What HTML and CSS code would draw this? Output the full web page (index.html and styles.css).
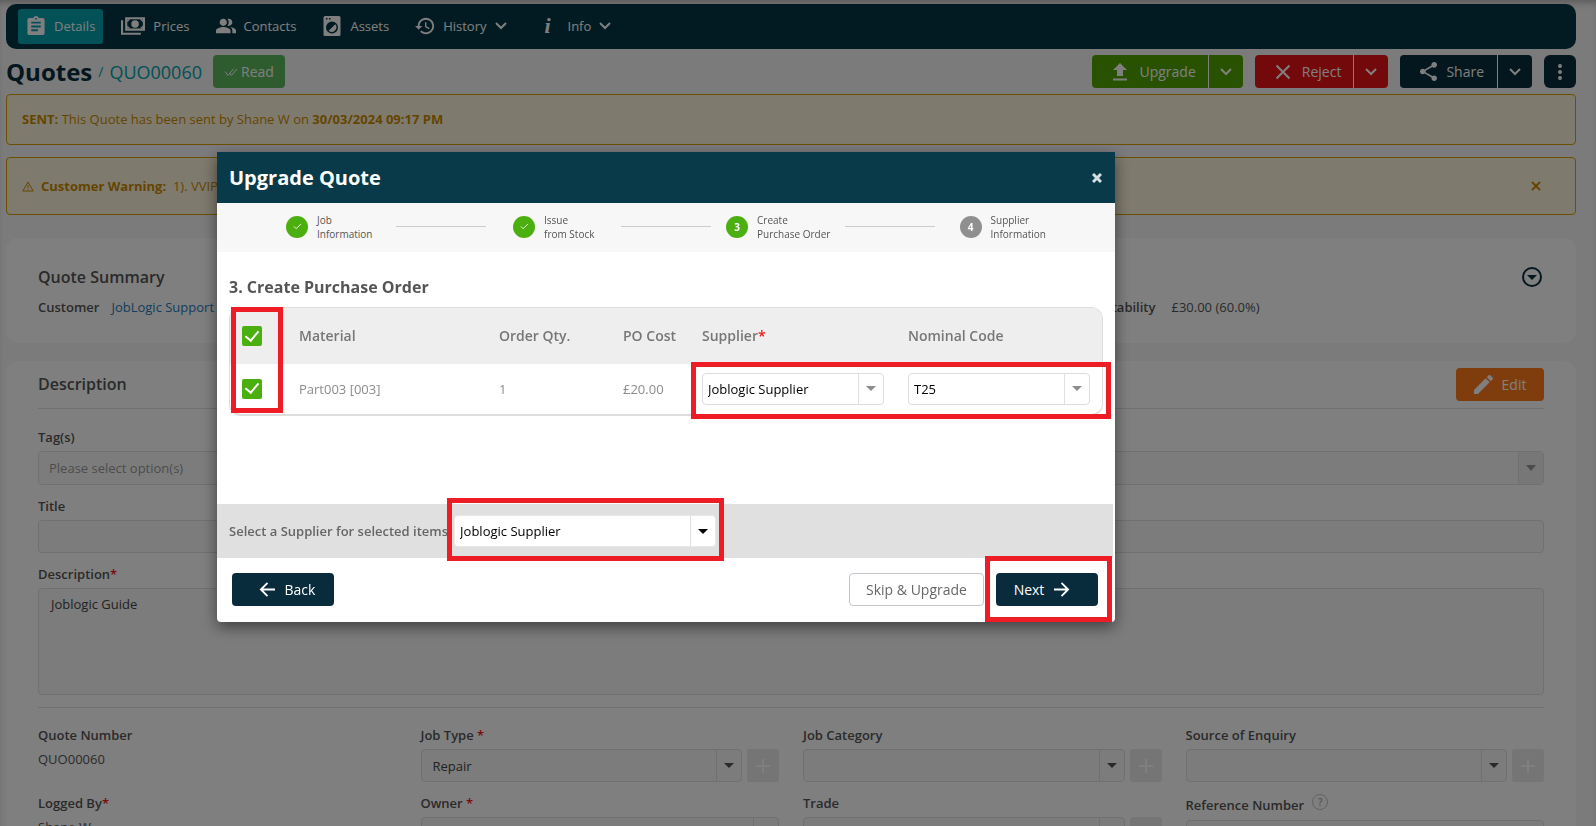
FILE: index.html
```html
<!DOCTYPE html>
<html lang="en">
<head>
<meta charset="utf-8">
<title>Quotes / QUO00060</title>
<link rel="stylesheet" href="styles.css">
</head>
<body>
<div class="page">
  <nav class="nav">
    <a class="tab tab-active" href="#details">
      <svg class="icon-nav" viewBox="2 1 20 21"><path d="M19 3h-4.180C14.400 1.840 13.300 1 12 1s-2.400.84-2.820 2H5c-1.100 0-2 .9-2 2v14c0 1.100.9 2 2 2h14c1.100 0 2-.9 2-2V5c0-1.100-.9-2-2-2zm-7 0c.55 0 1 .45 1 1s-.45 1-1 1-1-.45-1-1 .45-1 1-1zm2 14H7v-2h7v2zm3-4H7v-2h10v2zm0-4H7V7h10v2z"/></svg>
      Details</a>
    <a class="tab" href="#prices">
      <svg class="icon-wide" viewBox="0 0 23 17"><path fill-rule="evenodd" d="M4 0h19v13H4zM6 2v9h15V2z"/><path d="M6 2h3L6 5zM21 2v3l-3-3zM6 11V8l3 3zM21 11h-3l3-3z"/><circle cx="13.500" cy="6.500" r="3.600"/><path d="M0 3h2v12h17v2H0z"/></svg>
      Prices</a>
    <a class="tab" href="#contacts">
      <svg class="icon-nav" viewBox="1 2 22 20"><path d="M16.670 13.130C18.040 14.060 19 15.320 19 17v3h4v-3c0-2.180-3.570-3.470-6.330-3.870zM15 12c2.210 0 4-1.790 4-4s-1.790-4-4-4c-.47 0-.91.1-1.330.24C14.500 5.270 15 6.580 15 8s-.5 2.730-1.330 3.760c.42.14.86.24 1.330.24zM9 12c2.210 0 4-1.790 4-4s-1.790-4-4-4-4 1.790-4 4 1.790 4 4 4zm0 1c-2.670 0-8 1.340-8 4v3h16v-3c0-2.660-5.330-4-8-4z"/></svg>
      Contacts</a>
    <a class="tab" href="#assets">
      <svg class="icon-nav" viewBox="2 2 20 20"><path fill-rule="evenodd" d="M5 2h14a1.500 1.500 0 0 1 1.500 1.500v17A1.500 1.500 0 0 1 19 22H5a1.500 1.500 0 0 1-1.500-1.500v-17A1.500 1.500 0 0 1 5 2zM6 4v1.500h1.500V4zm3 0v1.500h1.500V4zM12 7.500a6 6 0 1 0 0 12 6 6 0 0 0 0-12z"/><path d="M15.300 10.200a4.700 4.700 0 0 1-6.600 6.600z"/></svg>
      Assets</a>
    <a class="tab" href="#history">
      <svg class="icon-nav" viewBox="1 2 22 20"><path d="M13 3c-4.970 0-9 4.030-9 9H1l3.890 3.890.07.14L9 12H6c0-3.870 3.130-7 7-7s7 3.130 7 7-3.130 7-7 7c-1.930 0-3.680-.79-4.940-2.060l-1.420 1.420C8.270 19.990 10.510 21 13 21c4.970 0 9-4.030 9-9s-4.030-9-9-9zm-1 5v5l4.280 2.540.72-1.210-3.500-2.080V8H12z"/></svg>
      History
      <svg class="chevron" viewBox="0 0 12 8"><path d="M1 1l5 5 5-5"/></svg></a>
    <a class="tab tab-info" href="#info">
      <span class="info-mark">i</span>
      Info
      <svg class="chevron" viewBox="0 0 12 8"><path d="M1 1l5 5 5-5"/></svg></a>
  </nav>

  <header class="heading">
    <h1 class="title">Quotes</h1>
    <span class="slash">/</span>
    <span class="quote-id">QUO00060</span>
    <button class="btn btn-read" type="button">
      <svg class="icon-read" viewBox="0 0 14 10"><path d="M1 4.500l3 4L9.500 2M5.500 6l2 2.500L13 2"/></svg>
      Read</button>
    <div class="actions">
      <div class="split split-green">
        <button class="btn split-main" type="button">
          <svg class="icon-btn" viewBox="4 2 16 19"><path d="M9 16h6v-6h4l-7-7-7 7h4zm-4 2.500h14V20.500H5z"/></svg>
          Upgrade</button>
        <button class="btn split-more" type="button" aria-label="More upgrade options"><svg class="chevron" viewBox="0 0 12 8"><path d="M1 1l5 5 5-5"/></svg></button>
      </div>
      <div class="split split-red">
        <button class="btn split-main" type="button">
          <svg class="icon-btn icon-line" viewBox="0 0 16 16"><path d="M1.500 1.500l13 13M14.500 1.500l-13 13"/></svg>
          Reject</button>
        <button class="btn split-more" type="button" aria-label="More reject options"><svg class="chevron" viewBox="0 0 12 8"><path d="M1 1l5 5 5-5"/></svg></button>
      </div>
      <div class="split split-navy">
        <button class="btn split-main split-share" type="button">
          <svg class="icon-share" viewBox="2 1 20 22"><path d="M18 16.080c-.76 0-1.440.3-1.960.77L8.910 12.700c.05-.23.09-.46.09-.7s-.04-.47-.09-.7l7.050-4.110c.54.5 1.250.81 2.040.81 1.660 0 3-1.340 3-3s-1.340-3-3-3-3 1.340-3 3c0 .24.04.47.09.7L8.040 9.810C7.500 9.310 6.790 9 6 9c-1.660 0-3 1.340-3 3s1.340 3 3 3c.79 0 1.500-.31 2.040-.81l7.120 4.160c-.05.21-.08.43-.08.65 0 1.610 1.310 2.920 2.920 2.920s2.920-1.310 2.920-2.920-1.310-2.920-2.920-2.920z"/></svg>
          Share</button>
        <button class="btn split-more" type="button" aria-label="More share options"><svg class="chevron" viewBox="0 0 12 8"><path d="M1 1l5 5 5-5"/></svg></button>
      </div>
      <button class="btn btn-kebab" type="button" aria-label="Menu"><svg class="icon-kebab" viewBox="0 0 4 16"><circle cx="2" cy="2" r="2"/><circle cx="2" cy="8" r="2"/><circle cx="2" cy="14" r="2"/></svg></button>
    </div>
  </header>

  <div class="alert"><p><b>SENT:</b> This Quote has been sent by Shane W on <b>30/03/2024 09:17 PM</b></p></div>
  <div class="alert alert-tall">
    <svg class="icon-warn" viewBox="0 0 12 11"><path d="M6 1L11.200 10H.8zM6 4v3.200M6 8v1"/></svg>
    <p><b>Customer Warning:</b>&nbsp; 1). VVIP</p>
    <button class="alert-close" type="button" aria-label="Dismiss"><svg class="icon-x" viewBox="0 0 10 10"><path d="M1 1l8 8M9 1L1 9"/></svg></button>
  </div>

  <section class="card card-summary">
    <div class="card-head">
      <h2 class="card-title">Quote Summary</h2>
      <button class="toggle" type="button" aria-label="Expand summary"><svg viewBox="0 0 20 20"><circle cx="10" cy="10" r="9"/><path d="M5 8h10l-5 5z"/></svg></button>
    </div>
    <dl class="facts">
      <div class="fact"><dt>Customer</dt><dd><a href="#customer">JobLogic Support</a></dd></div>
      <div class="fact fact-wide"><dt>Profitability</dt><dd>£30.00 (60.0%)</dd></div>
    </dl>
  </section>

  <section class="card card-description">
    <div class="card-head card-head-ruled">
      <h2 class="card-title">Description</h2>
      <button class="btn btn-edit" type="button">
        <svg class="icon-edit" viewBox="3 3 18 18"><path d="M3 17.250V21h3.750L17.810 9.940l-3.750-3.750L3 17.250zM20.710 7.040c.39-.39.39-1.020 0-1.410l-2.340-2.340c-.39-.39-1.020-.39-1.410 0l-1.830 1.830 3.750 3.750 1.830-1.830z"/></svg>
        Edit</button>
    </div>
    <div class="field field-tags">
      <label for="tags">Tag(s)</label>
      <div class="select select-tags"><select id="tags" disabled><option>Please select option(s)</option></select><span class="arrow"></span></div>
    </div>
    <div class="field">
      <label for="title">Title</label>
      <input class="input" id="title" type="text" disabled>
    </div>
    <div class="field">
      <label for="description">Description<i class="req">*</i></label>
      <textarea class="input textarea" id="description" disabled>Joblogic Guide</textarea>
    </div>
    <div class="grid">
      <div class="field"><span class="label">Quote Number</span><span class="value">QUO00060</span></div>
      <div class="field"><label for="job-type">Job Type <i class="req">*</i></label>
        <div class="with-add"><div class="select"><select id="job-type" disabled><option>Repair</option></select><span class="arrow"></span></div><button class="add" type="button" disabled aria-label="Add job type"><svg viewBox="0 0 14 14"><path d="M7 0v14M0 7h14"/></svg></button></div></div>
      <div class="field"><label for="job-category">Job Category</label>
        <div class="with-add"><div class="select"><select id="job-category" disabled><option></option></select><span class="arrow"></span></div><button class="add" type="button" disabled aria-label="Add job category"><svg viewBox="0 0 14 14"><path d="M7 0v14M0 7h14"/></svg></button></div></div>
      <div class="field"><label for="source">Source of Enquiry</label>
        <div class="with-add"><div class="select"><select id="source" disabled><option></option></select><span class="arrow"></span></div><button class="add" type="button" disabled aria-label="Add source of enquiry"><svg viewBox="0 0 14 14"><path d="M7 0v14M0 7h14"/></svg></button></div></div>
      <div class="field"><span class="label">Logged By<i class="req">*</i></span><span class="value">Shane W</span></div>
      <div class="field"><label for="owner">Owner <i class="req">*</i></label>
        <div class="select"><select id="owner" disabled><option></option></select><span class="arrow"></span></div></div>
      <div class="field"><label for="trade">Trade</label>
        <div class="with-add"><div class="select"><select id="trade" disabled><option></option></select><span class="arrow"></span></div><button class="add" type="button" disabled aria-label="Add trade"><svg viewBox="0 0 14 14"><path d="M7 0v14M0 7h14"/></svg></button></div></div>
      <div class="field"><label class="label-help" for="reference">Reference Number <span class="help">?</span></label>
        <input class="input" id="reference" type="text" disabled></div>
    </div>
  </section>
</div>

<div class="overlay">
  <div class="modal" role="dialog" aria-labelledby="modal-title">
    <div class="modal-head">
      <h2 class="modal-title" id="modal-title">Upgrade Quote</h2>
      <button class="modal-close" type="button" aria-label="Close"><svg class="icon-x icon-x-bold" viewBox="0 0 10 10"><path d="M1 1l8 8M9 1L1 9"/></svg></button>
    </div>
    <ol class="steps">
      <li class="step"><span class="step-mark"><svg viewBox="0 0 10 8"><path d="M1 4l2.500 2.500L9 1"/></svg></span><span>Job<br>Information</span></li>
      <li class="step"><span class="step-mark"><svg viewBox="0 0 10 8"><path d="M1 4l2.500 2.500L9 1"/></svg></span><span>Issue<br>from Stock</span></li>
      <li class="step"><span class="step-mark">3</span><span>Create<br>Purchase Order</span></li>
      <li class="step"><span class="step-mark step-todo">4</span><span>Supplier<br>Information</span></li>
    </ol>
    <div class="modal-body">
      <h3 class="section-title">3. Create Purchase Order</h3>
      <div class="table-wrap">
        <table class="table">
          <colgroup><col class="col-check"><col class="col-material"><col class="col-qty"><col class="col-cost"><col class="col-supplier"><col></colgroup>
          <thead>
            <tr><th><input class="check" type="checkbox" checked aria-label="Select all"></th><th>Material</th><th>Order Qty.</th><th>PO Cost</th><th>Supplier<i class="req">*</i></th><th>Nominal Code</th></tr>
          </thead>
          <tbody>
            <tr><td><input class="check" type="checkbox" checked aria-label="Select Part003"></td><td>Part003 [003]</td><td>1</td><td>£20.00</td>
              <td><div class="select select-row"><select aria-label="Supplier"><option>Joblogic Supplier</option></select><span class="arrow"></span></div></td>
              <td><div class="select select-row"><select aria-label="Nominal Code"><option>T25</option></select><span class="arrow"></span></div></td></tr>
          </tbody>
        </table>
        <div class="mark mark-checks"></div>
        <div class="mark mark-selects"></div>
      </div>
    </div>
    <div class="bulk">
      <label for="bulk-supplier">Select a Supplier for selected items</label>
      <div class="bulk-pick">
        <div class="select select-bulk"><select id="bulk-supplier"><option>Joblogic Supplier</option></select><span class="arrow"></span></div>
        <div class="mark mark-bulk"></div>
      </div>
    </div>
    <div class="modal-foot">
      <button class="btn btn-navy" type="button"><svg class="icon-arrow" viewBox="0 0 18 16"><path d="M17 8H2M9 1L2 8l7 7"/></svg>Back</button>
      <button class="btn btn-plain" type="button">Skip &amp; Upgrade</button>
      <div class="next-wrap">
        <button class="btn btn-navy btn-next" type="button">Next<svg class="icon-arrow" viewBox="0 0 18 16"><path d="M1 8h15M9 1l7 7-7 7"/></svg></button>
        <div class="mark mark-next"></div>
      </div>
    </div>
  </div>
</div>
</body>
</html>
```

FILE: styles.css
```css
* { box-sizing: border-box; }

body {
  margin: 0;
  font: 13px/20px "Open Sans", "Noto Sans", sans-serif;
  color: #555;
  background: #f6f6f6;
}

h1, h2, h3, p, dl, dd, ol { margin: 0; padding: 0; }
button, input, select, textarea { font: inherit; color: inherit; margin: 0; }
svg { display: block; flex: none; fill: currentColor; }

.page {
  height: 100vh;
  overflow: hidden;
  padding: 4px 20px 0 6px;
  box-shadow: inset 0 6px 6px -3px rgba(0, 0, 0, 0.25);
}

/* Navigation */
.nav {
  display: flex;
  align-items: center;
  gap: 10px;
  height: 45px;
  padding: 0 12px;
  border-radius: 10px;
  background: #053745;
}
.tab {
  display: flex;
  align-items: center;
  gap: 8px;
  height: 35px;
  padding: 0 8px 2px;
  border-radius: 3px;
  color: #fff;
  text-decoration: none;
}
.tab-active { background: #02a2ad; }
.icon-nav { width: 20px; height: 20px; }
.icon-wide { width: 24px; height: 18px; }
.tab-info { margin-left: 3px; }
.info-mark {
  width: 24px;
  text-align: center;
  font: italic bold 22px/20px "Liberation Serif", serif;
}
.chevron {
  width: 12px;
  height: 8px;
  fill: none;
  stroke: currentColor;
  stroke-width: 2;
}

/* Heading */
.heading {
  display: flex;
  align-items: center;
  height: 33px;
  margin: 6px 0;
}
.title { font-size: 24px; line-height: 32px; font-weight: 700; color: #082c3c; }
.slash { margin: 0 6px; font-size: 14px; color: #02a2ad; }
.quote-id { margin-right: 11px; font-size: 18px; color: #02a2ad; }
.btn {
  display: flex;
  align-items: center;
  justify-content: center;
  height: 33px;
  padding: 0;
  border: 0;
  border-radius: 4px;
  font-size: 14px;
  color: #fff;
  background: none;
}
.btn-read { gap: 3px; width: 72px; background: #5cb85c; }
.icon-read { width: 14px; height: 10px; fill: none; stroke: #fff; stroke-width: 1; }
.actions { display: flex; gap: 12px; margin-left: auto; }
.split { display: flex; border-radius: 4px; }
.split-main { gap: 11px; padding: 0 12px 0 20px; }
.split-share { gap: 8px; padding: 0 13px 0 19px; }
.split-more { width: 35px; border-left: 1px solid #fff; border-radius: 0; }
.split-green { background: #50a400; }
.split-red { background: #e81216; }
.split-navy { background: #082c3c; }
.icon-btn { width: 16px; height: 19px; }
.icon-line { height: 16px; fill: none; stroke: currentColor; stroke-width: 2; }
.icon-share { width: 19px; height: 21px; }
.btn-kebab { width: 32px; border-radius: 6px; background: #082c3c; }
.icon-kebab { width: 4px; height: 16px; }

/* Alerts */
.alert {
  display: flex;
  align-items: center;
  gap: 7px;
  height: 51px;
  margin-bottom: 12px;
  padding: 0 15px 2px;
  border: 1px solid #d8a000;
  border-radius: 4px;
  color: #c98b00;
  background: #fff5dc;
}
.alert-tall { height: 58px; margin-bottom: 23px; padding-bottom: 0; }
.icon-warn { width: 12px; height: 11px; fill: none; stroke: currentColor; stroke-width: 1; }
.alert-close {
  margin: 0 19px 0 auto;
  padding: 0;
  border: 0;
  background: none;
}
.icon-x { width: 10px; height: 10px; fill: none; stroke: currentColor; stroke-width: 2; }

/* Cards */
.card { padding: 0 32px; border-radius: 12px; background: #fff; }
.card-summary { margin-bottom: 18px; padding-top: 26px; padding-bottom: 26px; }
.card-head { display: flex; align-items: center; justify-content: space-between; }
.card-title { font-size: 16px; line-height: 26px; font-weight: 600; }
.toggle { padding: 0 2px; border: 0; background: none; color: #082c3c; }
.toggle svg { width: 20px; height: 20px; }
.toggle circle { fill: none; stroke: currentColor; stroke-width: 2; }
.facts { display: grid; grid-template-columns: 9fr 4fr; column-gap: 4px; margin-top: 7px; }
.fact { display: flex; gap: 12px; }
.fact-wide { gap: 16px; }
dt { font-weight: 600; }
a { color: #2a7ab8; text-decoration: none; }

.card-head-ruled { align-items: flex-start; padding: 7px 0; border-bottom: 1px solid #e0e0e0; }
.card-head-ruled .card-title { line-height: 32px; }
.btn-edit { gap: 9px; width: 88px; background: #ff7b1c; }
.icon-edit { width: 19px; height: 19px; }

.card-description { padding-bottom: 24px; }
.field { display: flex; flex-direction: column; margin-top: 11px; }
.field-tags { margin-top: 18px; }
label, .label { font-weight: 600; margin-bottom: 4px; }
.req { font-style: normal; color: #f01818; }
.input, .select {
  width: 100%;
  height: 33px;
  border: 1px solid #e0e0e0;
  border-radius: 4px;
  background: #f9f9f9;
}
.input { padding: 0 11px; color: #444; }
.textarea { display: block; height: 107px; padding: 5px 12px; resize: none; }
.select { display: flex; }
.select select {
  flex: 1;
  min-width: 0;
  appearance: none;
  padding: 0 11px;
  border: 0;
  border-radius: 4px;
  color: #444;
  background: none;
  opacity: 1;
}
.arrow {
  display: flex;
  align-items: center;
  justify-content: center;
  width: 25px;
  border-left: 1px solid #e0e0e0;
}
.arrow::before {
  content: "";
  border: 5px solid transparent;
  border-top-color: #555;
  border-bottom: 0;
}
.select-tags { height: 34px; }
.select-tags select { padding: 0 10px; color: #999; }
.select-tags .arrow { background: #eee; }
.select-tags .arrow::before { border-top-color: #999; border-top-width: 6px; }

.grid {
  display: grid;
  grid-template-columns: repeat(4, 1fr);
  column-gap: 24px;
  margin-top: 12px;
  padding-top: 6px;
  border-top: 1px solid #e0e0e0;
}
.with-add { display: flex; gap: 5px; }
.add {
  display: flex;
  align-items: center;
  justify-content: center;
  flex: none;
  width: 32px;
  height: 33px;
  padding: 0;
  border: 0;
  border-radius: 3px;
  color: #fff;
  background: #eaeaea;
}
.add svg { width: 14px; height: 14px; stroke: currentColor; stroke-width: 2; }
.label-help { display: flex; gap: 8px; align-items: center; padding-top: 1px; }
.help {
  width: 16px;
  height: 16px;
  margin-bottom: 6px;
  border: 1px solid #c4c4c4;
  border-radius: 50%;
  text-align: center;
  font-size: 10px;
  line-height: 14px;
  color: #aaa;
}

/* Modal */
.overlay {
  position: fixed;
  inset: 0;
  padding: 152px 24px 0 217px;
  background: rgba(0, 0, 0, 0.5);
}
.modal {
  max-width: 898px;
  border-radius: 0 0 4px 4px;
  background: #fff;
  box-shadow: 0 5px 15px rgba(0, 0, 0, 0.5);
}
.modal-head {
  display: flex;
  align-items: center;
  justify-content: space-between;
  height: 51px;
  padding: 0 13px 0 12px;
  color: #fff;
  background: #083a49;
}
.modal-title { font-size: 20px; line-height: 28px; font-weight: 700; }
.modal-close { padding: 0; border: 0; color: #d5dfe2; background: none; }
.icon-x-bold { stroke-width: 3; }

.steps {
  display: grid;
  grid-template-columns: repeat(4, 1fr);
  height: 49px;
  padding-bottom: 2px;
  list-style: none;
  font-size: 10px;
  line-height: 14px;
  background: #f7f7f7;
}
.step { display: flex; align-items: center; gap: 9px; }
.step::before { content: ""; width: 45px; margin-right: auto; }
.step::after {
  content: "";
  flex: none;
  width: 90px;
  height: 1px;
  margin-left: auto;
  margin-right: -45px;
  background: #ccc;
}
.step:last-child::after { width: 45px; margin-right: 0; background: none; }
.step-mark {
  display: flex;
  align-items: center;
  justify-content: center;
  width: 22px;
  height: 22px;
  border-radius: 50%;
  font-weight: 700;
  color: #fff;
  background: #4caf10;
}
.step-mark svg { width: 9px; height: 7px; fill: none; stroke: #fff; stroke-width: 1; }
.step-todo { background: #8f8f8f; }

.modal-body { min-height: 252px; padding: 22px 12px 0; }
.section-title { font-size: 16px; line-height: 26px; font-weight: 700; }
.table-wrap {
  position: relative;
  margin-top: 7px;
  border: 1px solid #ddd;
  border-bottom-width: 2px;
  border-radius: 12px;
}
.table { width: 100%; table-layout: fixed; border-collapse: collapse; color: #8c8c8c; }
.col-check { width: 57px; }
.col-material { width: 200px; }
.col-qty { width: 124px; }
.col-cost { width: 79px; }
.col-supplier { width: 206px; }
th, td { padding: 0 12px; text-align: left; }
th { height: 56px; font-size: 14px; font-weight: 600; color: #777; background: #eee; }
th:first-child { border-top-left-radius: 11px; }
th:last-child { border-top-right-radius: 11px; }
td { height: 50px; padding-bottom: 1px; }
.check {
  display: grid;
  place-items: center;
  appearance: none;
  width: 20px;
  height: 20px;
  border-radius: 2px;
  background: #4caf10;
}
.check::before {
  content: "";
  width: 6px;
  height: 11px;
  margin-bottom: 4px;
  border: solid #fff;
  border-width: 0 2px 2px 0;
  transform: rotate(40deg);
}
.select-row, .select-bulk { background: #fff; border-color: #ddd; }
.select-row { height: 32px; }
.select-row select, .select-bulk select { padding: 0 5px; color: #000; }
.select-row .arrow::before { border-top-color: #8c8c8c; }

.bulk {
  display: flex;
  align-items: center;
  gap: 6px;
  height: 54px;
  margin-right: 2px;
  padding: 0 12px;
  background: #e0e0e0;
}
.bulk label { margin: 0; color: #666; }
.bulk-pick { position: relative; }
.select-bulk { width: 262px; height: 32px; border-color: #e8e8e8; }
.select-bulk .arrow::before { border-top-color: #000; }

.modal-foot { display: flex; align-items: center; padding: 15px 17px 16px 15px; }
.btn-navy { gap: 9px; width: 102px; padding-left: 8px; background: #082c3c; }
.btn-next { padding: 0 10px 0 0; }
.btn-plain {
  width: 135px;
  margin-left: auto;
  margin-right: 12px;
  border: 1px solid #c5c5d0;
  color: #666;
  background: #fff;
}
.icon-arrow { width: 17px; height: 15px; fill: none; stroke: currentColor; stroke-width: 2; }
.next-wrap { position: relative; }

/* Highlight frames */
.mark { position: absolute; border: 5px solid #ee1c24; pointer-events: none; }
.mark-checks { top: -1px; left: 1px; width: 52px; height: 106px; }
.mark-selects { top: 54px; right: -9px; width: 420px; height: 57px; }
.mark-bulk { inset: -17px -8px -14px -7px; }
.mark-next { inset: -17px -14px -16px -11px; }
```
